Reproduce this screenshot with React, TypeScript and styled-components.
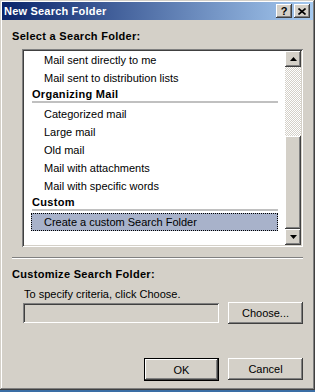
import React from 'react';
import styled, {createGlobalStyle, css} from 'styled-components';

const GlobalStyle = createGlobalStyle`
	html, body {
		margin: 0;
		padding: 0;
		background: #3a6ea5;
	}

	body {
		font-family: "Liberation Sans", Arial, sans-serif;
		font-size: 11px;
		color: #000;
	}
`;

const face = '#d4d0c8';

const raised = css`
	box-shadow: inset -1px -1px #404040, inset 1px 1px #ffffff,
		inset -2px -2px #808080, inset 2px 2px ${face};
`;

const sunken = css`
	box-shadow: inset 1px 1px #808080, inset -1px -1px #ffffff,
		inset 2px 2px #404040, inset -2px -2px ${face};
`;

const Window = styled.div`
	box-sizing: border-box;
	width: 315px;
	height: 390px;
	padding: 2px;
	background: ${face};
	display: flex;
	flex-direction: column;
	box-shadow: inset -1px -1px #404040, inset 1px 1px ${face},
		inset -2px -2px #808080, inset 2px 2px #ffffff;
`;

const TitleBar = styled.div`
	height: 18px;
	display: flex;
	align-items: center;
	padding: 0 3px 0 2px;
	background: linear-gradient(to right, #0a246a, #a6caf0);
`;

const TitleText = styled.span`
	flex: 1;
	color: #fff;
	font-weight: bold;
	letter-spacing: 0.2px;
	line-height: 18px;
`;

const CaptionButtons = styled.div`
	display: flex;
	gap: 2px;
`;

const CaptionButton = styled.div`
	box-sizing: border-box;
	width: 16px;
	height: 14px;
	background: ${face};
	display: flex;
	align-items: center;
	justify-content: center;
	font-weight: bold;
	font-size: 11px;
	line-height: 14px;
	${raised};
`;

const Content = styled.div`
	flex: 1;
	display: flex;
	flex-direction: column;
	padding: 0 10px;
`;

const SectionLabel = styled.div<{ $top: number }>`
	margin-top: ${p => p.$top}px;
	font-weight: bold;
	letter-spacing: 0.3px;
	line-height: 14px;
	white-space: nowrap;
`;

const ListBox = styled.div`
	box-sizing: border-box;
	margin: 6px 0 0 10px;
	height: 198px;
	padding: 2px;
	background: #fff;
	display: flex;
	${sunken};
`;

const Items = styled.div`
	flex: 1;
	padding: 0 7px;
	overflow: hidden;
`;

const GroupHeader = styled.div`
	height: 18px;
	padding-left: 1px;
	font-weight: bold;
	letter-spacing: 0.3px;
	line-height: 14px;
	white-space: nowrap;

	&::after {
		content: '';
		display: block;
		height: 2px;
		background: #c0c0c0;
	}
`;

const Item = styled.div<{ $selected?: boolean }>`
	box-sizing: border-box;
	height: 18px;
	padding-left: 12px;
	line-height: 16px;
	white-space: nowrap;
	border: 1px dotted ${p => (p.$selected ? '#000' : 'transparent')};
	background: ${p => (p.$selected ? '#a8b2ca' : 'transparent')};
`;

const ScrollBar = styled.div`
	width: 16px;
	display: flex;
	flex-direction: column;
	background-color: #fff;
	background-image: repeating-conic-gradient(${face} 0 25%, #fff 0 50%);
	background-size: 2px 2px;
`;

const ScrollArrow = styled.div`
	box-sizing: border-box;
	width: 16px;
	height: 16px;
	background: ${face};
	display: flex;
	align-items: center;
	justify-content: center;
	${raised};
`;

const ScrollTrack = styled.div<{ $size: number }>`
	height: ${p => p.$size}px;
`;

const ScrollThumb = styled.div`
	box-sizing: border-box;
	height: 93px;
	background: ${face};
	${raised};
`;

const Divider = styled.div`
	margin-top: 10px;
	height: 0;
	border-top: 1px solid #808080;
	border-bottom: 1px solid #fff;
`;

const Hint = styled.div`
	margin-top: 6px;
	padding-left: 12px;
	line-height: 14px;
	white-space: nowrap;
`;

const CriteriaRow = styled.div`
	margin-top: 1px;
	padding-left: 11px;
	display: flex;
	align-items: center;
	gap: 9px;
`;

const CriteriaField = styled.div`
	box-sizing: border-box;
	flex: 1;
	height: 20px;
	background: ${face};
	${sunken};
`;

const Button = styled.button<{ $default?: boolean }>`
	box-sizing: border-box;
	width: 75px;
	height: ${p => (p.$default ? 23 : 22)}px;
	padding: 0;
	border: ${p => (p.$default ? '1px solid #000' : 'none')};
	background: ${face};
	font-family: inherit;
	font-size: 11px;
	color: #000;
	${raised};
`;

const Footer = styled.div`
	margin-top: 34px;
	display: flex;
	justify-content: flex-end;
	gap: 9px;
`;

const Arrow = ({down}: { down?: boolean }) => (
	<svg width="7" height="4" viewBox="0 0 7 4">
		<path d={down ? 'M0 0h7L3.5 4z' : 'M0 4h7L3.5 0z'} fill="#000"/>
	</svg>
);

const CloseGlyph = () => (
	<svg width="8" height="7" viewBox="0 0 8 7">
		<path d="M0.5 0.5l7 6M7.5 0.5l-7 6" stroke="#000" strokeWidth="1.6"/>
	</svg>
);

type Row = { kind: 'header' | 'item'; label: string; selected?: boolean };

const rows: Row[] = [
	{kind: 'item', label: 'Mail sent directly to me'},
	{kind: 'item', label: 'Mail sent to distribution lists'},
	{kind: 'header', label: 'Organizing Mail'},
	{kind: 'item', label: 'Categorized mail'},
	{kind: 'item', label: 'Large mail'},
	{kind: 'item', label: 'Old mail'},
	{kind: 'item', label: 'Mail with attachments'},
	{kind: 'item', label: 'Mail with specific words'},
	{kind: 'header', label: 'Custom'},
	{kind: 'item', label: 'Create a custom Search Folder', selected: true},
];

export default function App() {
	return (
		<>
			<GlobalStyle/>
			<Window>
				<TitleBar>
					<TitleText>New Search Folder</TitleText>
					<CaptionButtons>
						<CaptionButton>?</CaptionButton>
						<CaptionButton><CloseGlyph/></CaptionButton>
					</CaptionButtons>
				</TitleBar>

				<Content>
					<SectionLabel $top={9}>Select a Search Folder:</SectionLabel>

					<ListBox>
						<Items>
							{rows.map(row => row.kind === 'header'
								? <GroupHeader key={row.label}>{row.label}</GroupHeader>
								: <Item key={row.label} $selected={row.selected}>{row.label}</Item>)}
						</Items>
						<ScrollBar>
							<ScrollArrow><Arrow/></ScrollArrow>
							<ScrollTrack $size={69}/>
							<ScrollThumb/>
							<ScrollArrow><Arrow down/></ScrollArrow>
						</ScrollBar>
					</ListBox>

					<Divider/>

					<SectionLabel $top={8}>Customize Search Folder:</SectionLabel>
					<Hint>To specify criteria, click Choose.</Hint>

					<CriteriaRow>
						<CriteriaField/>
						<Button>Choose...</Button>
					</CriteriaRow>

					<Footer>
						<Button $default>OK</Button>
						<Button>Cancel</Button>
					</Footer>
				</Content>
			</Window>
		</>
	);
}
